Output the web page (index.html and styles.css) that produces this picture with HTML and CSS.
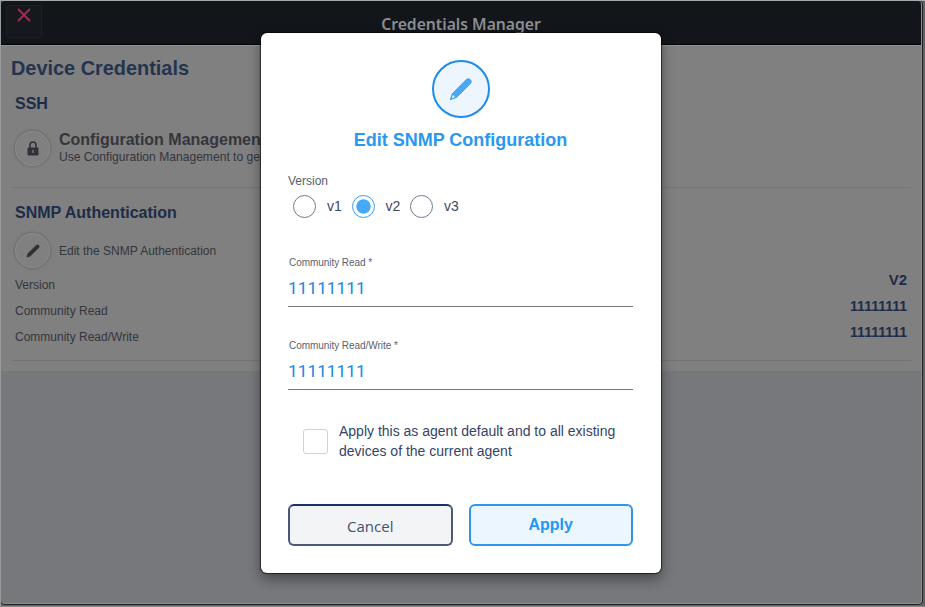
FILE: index.html
```html
<!DOCTYPE html>
<html lang="en">
<head>
<meta charset="utf-8">
<title>Credentials Manager</title>
<link rel="stylesheet" href="styles.css">
</head>
<body>
<div class="window">
  <header class="topbar">
    <button class="close" aria-label="Close"><svg width="14" height="14" viewBox="0 0 14 14"><path d="M1 1L13 13M13 1L1 13"/></svg></button>
    <h1 class="topbar-title">Credentials Manager</h1>
  </header>
  <main class="page">
    <h2 class="page-title">Device Credentials</h2>
    <section class="section ssh">
      <h3 class="section-title">SSH</h3>
      <div class="action">
        <span class="round"><svg width="12" height="15" viewBox="0 0 12 15"><path class="shackle" d="M3 7V4a3 3 0 0 1 6 0v3"/><rect class="ink" x="0.5" y="6.5" width="11" height="8" rx="1"/><path class="keyhole" d="M6 9v3"/></svg></span>
        <div class="action-text">
          <strong class="action-title">Configuration Management</strong>
          <span class="action-note">Use Configuration Management to get access to the device</span>
        </div>
      </div>
    </section>
    <section class="section snmp">
      <h3 class="section-title">SNMP Authentication</h3>
      <div class="action">
        <span class="round"><svg width="14" height="14" viewBox="0 0 14 14"><path class="ink" d="M0.5 13.5L1.4 9.7L10 1.2C11 0.2 12 0.3 12.8 1.1C13.7 2 13.8 3 12.8 4L4.2 12.5Z"/></svg></span>
        <span class="action-label">Edit the SNMP Authentication</span>
      </div>
      <dl class="facts">
        <div class="fact"><dt>Version</dt><dd class="version">V2</dd></div>
        <div class="fact"><dt>Community Read</dt><dd>11111111</dd></div>
        <div class="fact"><dt>Community Read/Write</dt><dd>11111111</dd></div>
      </dl>
    </section>
  </main>
</div>

<div class="modal" role="dialog" aria-modal="true">
  <div class="badge"><svg width="24" height="24" viewBox="0 0 24 24"><path class="pencil" d="M1.3 22.7L3.2 16.8L16.6 3.2C18.3 1.5 19.9 1.4 21.2 2.6C22.5 3.8 22.6 5.4 21 7.1L7.3 20.6Z"/><path class="tip" d="M3.8 18L6 20L2.9 21.2Z"/></svg></div>
  <h2 class="modal-title">Edit SNMP Configuration</h2>
  <div class="version-label">Version</div>
  <div class="radios">
    <label class="radio"><span class="dot"></span><span>v1</span></label>
    <label class="radio"><span class="dot checked"></span><span>v2</span></label>
    <label class="radio"><span class="dot"></span><span>v3</span></label>
  </div>
  <div class="field first"><label class="field-label">Community Read *</label><div class="field-value">11111111</div></div>
  <div class="field"><label class="field-label">Community Read/Write *</label><div class="field-value">11111111</div></div>
  <label class="default-option"><span class="box"></span><span class="option-text">Apply this as agent default and to all existing<br>devices of the current agent</span></label>
  <div class="buttons">
    <button class="btn cancel">Cancel</button>
    <button class="btn apply">Apply</button>
  </div>
</div>
</body>
</html>
```

FILE: styles.css
```css
* { box-sizing: border-box; }
body {
  margin: 0;
  width: 925px;
  height: 607px;
  overflow: hidden;
  position: relative;
  background: #5f6163;
  border-top: 1px solid #a4aaa9;
  border-left: 1px solid #999c9d;
  border-bottom: 1px solid #8b8d8f;
  font-family: "Liberation Sans", Arial, sans-serif;
}
h1, h2, h3, dl, dd { margin: 0; }
button { font-family: inherit; padding: 0; }
svg { display: block; }

.window {
  width: 921px;
  height: 603px;
  border-right: 1px solid #8b8c8d;
  border-bottom: 1px solid #8b8c8d;
  border-radius: 4px;
  background: #77787c;
  box-shadow: 0 0 0 1px #222426;
  overflow: hidden;
}
.topbar {
  display: flex;
  height: 44px;
  background: #12161b;
  border-bottom: 1px solid #050608;
  padding: 4px 5px;
}
.close {
  width: 36px;
  height: 33px;
  border: 1px solid #1b2024;
  border-radius: 3px;
  background: #15191e;
  display: flex;
  justify-content: center;
  padding-top: 2px;
}
.close path { stroke: #a32b52; stroke-width: 1.9; fill: none; }
.topbar-title {
  flex: 1;
  padding-right: 36px;
  text-align: center;
  color: #8c8e91;
  font: 600 15.7px/38px "Noto Sans", sans-serif;
}
.page {
  height: 326px;
  background: #808080;
  border-top: 1px solid #929292;
  padding: 9px 10px 0 10px;
}
.page-title { color: #24344f; font-size: 19.9px; line-height: 26px; height: 37px; }
.section { border-bottom: 1px solid #747474; padding: 0 4px; }
.ssh { height: 96px; padding-top: 1px; }
.snmp { height: 173px; padding-top: 14px; }
.section-title { color: #1d2c48; font-size: 16px; line-height: 22px; }
.action { display: flex; align-items: center; gap: 10px; }
.ssh .action { margin-top: 15px; }
.snmp .action { margin-top: 9px; }
.round {
  width: 35px;
  height: 35px;
  margin-right: -1px;
  border-radius: 50%;
  border: 1px solid #8b8b8b;
  box-shadow: 0 0 3px #555;
  display: flex;
  align-items: center;
  justify-content: center;
}
.ink { fill: #30323a; }
.shackle { fill: none; stroke: #30323a; stroke-width: 1.6; }
.keyhole { stroke: #808080; stroke-width: 1.3; }
.action-text { display: flex; flex-direction: column; color: #34363c; white-space: nowrap; }
.action-title { font-size: 16px; line-height: 19px; }
.action-note { font-size: 12.1px; line-height: 17px; }
.action-label { font-size: 12px; color: #34363c; }
.facts { color: #34363c; font-size: 12px; margin-top: 3px; }
.fact { display: flex; justify-content: space-between; height: 26px; line-height: 28px; }
.fact dd { color: #1d2c48; font-weight: bold; font-size: 14px; line-height: 19px; }
.fact .version { font-size: 15px; line-height: 18px; }

.modal {
  position: absolute;
  left: 260px;
  top: 32px;
  width: 400px;
  height: 540px;
  border-radius: 6px;
  background: #fff;
  padding: 27px 28px 0 27px;
  box-shadow: 0 0 1px 1px rgba(0,0,0,.6), 0 6px 14px rgba(0,0,0,.42);
}
.badge {
  width: 58px;
  height: 58px;
  margin: 0 auto;
  border: 2px solid #1e8de9;
  border-radius: 50%;
  background: #edf6fe;
  display: flex;
  align-items: center;
  justify-content: center;
}
.pencil { fill: #4ba9f3; stroke: #2a95ea; stroke-width: .8; }
.tip { fill: #fff; }
.modal-title { margin-top: 11px; text-align: center; color: #2b98f0; font-size: 18px; line-height: 22px; }
.version-label { margin-top: 23px; color: #5b5f6d; font-size: 12px; line-height: 14px; }
.radios { display: flex; margin: 7px 0 0 5px; color: #3c4866; font-size: 14px; line-height: 23px; }
.radio { display: flex; width: 58.5px; gap: 11px; }
.dot {
  flex: none;
  width: 23px;
  height: 23px;
  border: 1px solid #73798a;
  border-radius: 50%;
}
.checked { border-color: #3a9bea; background: radial-gradient(circle, #45aaf6 0 6.8px, #fff 7.5px); }
.field { height: 83px; border-bottom: 1px solid #77797c; padding-top: 33px; }
.first { height: 89px; padding-top: 39px; }
.field-label { display: block; color: #5b5f6d; font-size: 10px; letter-spacing: -.05px; line-height: 12px; padding-left: 1px; }
.field-value { color: #2187e0; font: 17.3px/22px Roboto, sans-serif; margin-top: 8px; }
.default-option { display: flex; margin: 31px 0 0 15px; gap: 11px; }
.box { flex: none; width: 25px; height: 25px; border: 1px solid #cfd2d6; border-radius: 3px; margin-top: 8px; }
.option-text { color: #344568; font-size: 14px; line-height: 20px; white-space: nowrap; }
.buttons { display: flex; gap: 16px; margin-top: 43px; }
.btn { width: 165px; height: 42px; border-radius: 6px; }
.cancel { border: 2px solid #4a587a; border-top-color: #1b3268; background: #f3f4f6; color: #47506c; font: 15px/22px "Open Sans", sans-serif; padding-top: 2px; }
.apply { border: 2px solid #3096ec; background: #ebf6fe; color: #2596f3; font-size: 16px; font-weight: bold; }
```
